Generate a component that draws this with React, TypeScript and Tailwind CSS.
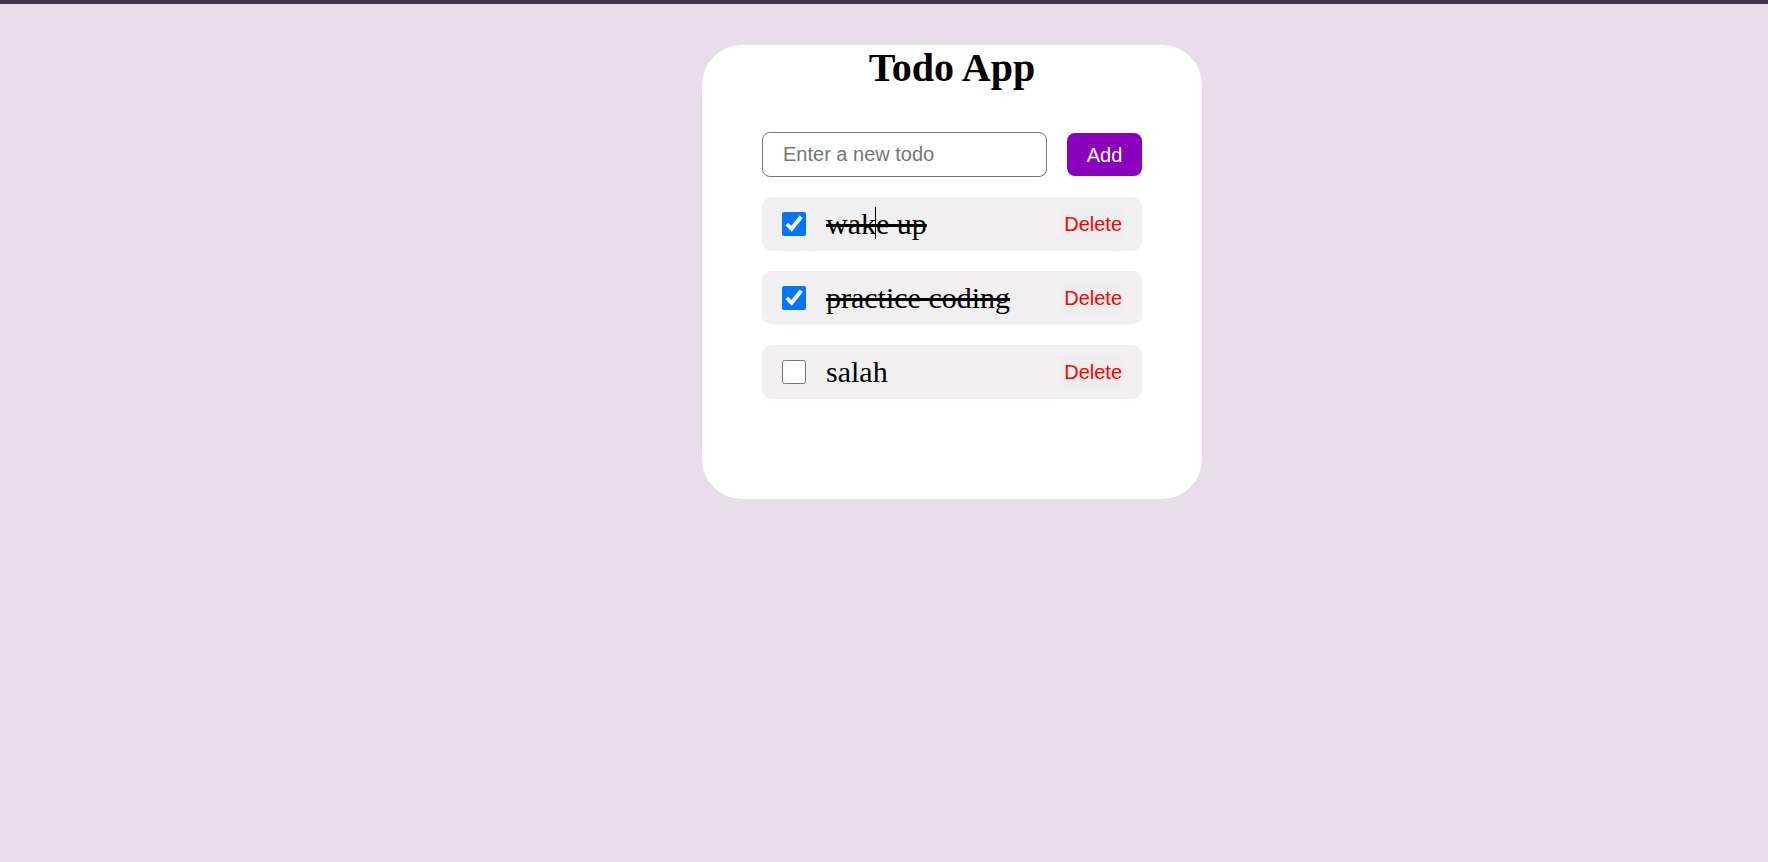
import React, { useState } from "react";

type Todo = { id: number; text: string; done: boolean };

export default function App() {
  const [todos, setTodos] = useState<Todo[]>([
    { id: 1, text: "wake up", done: true },
    { id: 2, text: "practice coding", done: true },
    { id: 3, text: "salah", done: false },
  ]);
  const [value, setValue] = useState("");

  const toggle = (id: number) =>
    setTodos((t) => t.map((x) => (x.id === id ? { ...x, done: !x.done } : x)));
  const remove = (id: number) => setTodos((t) => t.filter((x) => x.id !== id));
  const add = () => {
    if (!value.trim()) return;
    setTodos((t) => [...t, { id: Date.now(), text: value.trim(), done: false }]);
    setValue("");
  };

  return (
    <div className="min-h-screen h-[862px] bg-[#e8deea] flex flex-col">
      <div className="h-[4px] w-full bg-[#3e3747]" />
      <div className="flex justify-center pl-[136px] pt-[41px]">
        <div className="w-[500px] h-[454px] bg-white rounded-[40px] px-[60px] pt-[1px] flex flex-col">
          <h1 className="text-center font-bold text-[40px] leading-[44px] text-black [font-family:'Liberation_Serif',serif]">
            Todo App
          </h1>
          <div className="mt-[42px] flex items-center gap-[20px] h-[45px]">
            <input
              value={value}
              onChange={(e) => setValue(e.target.value)}
              placeholder="Enter a new todo"
              className="w-[285px] h-[45px] border border-[#767676] rounded-[8px] pl-[20px] pr-2 text-[20px] text-black placeholder:text-[#757575] outline-none [font-family:'Liberation_Sans',Arial,sans-serif]"
            />
            <button
              onClick={add}
              className="w-[75px] h-[43px] rounded-[8px] bg-[#8a00bf] text-white text-[20px] [font-family:'Liberation_Sans',Arial,sans-serif]"
            >
              Add
            </button>
          </div>
          <ul className="mt-[20px] flex flex-col gap-[20px]">
            {todos.map((t, i) => (
              <li
                key={t.id}
                className="relative h-[54px] rounded-[10px] bg-[#f1eff0] flex items-center px-[20px]"
              >
                <input
                  type="checkbox"
                  checked={t.done}
                  onChange={() => toggle(t.id)}
                  className="m-0 w-[24px] h-[24px] shrink-0 accent-[#0075ff]"
                />
                <span
                  className={
                    "ml-[20px] -mt-[2px] text-[30px] text-black [font-family:'Liberation_Serif',serif] " +
                    (t.done ? "line-through" : "")
                  }
                >
                  {t.text}
                </span>
                <button
                  onClick={() => remove(t.id)}
                  className="ml-auto h-[32px] pl-[2px] pr-0 bg-[#efeeef] text-[#ff0000] text-[20px] [font-family:'Liberation_Sans',Arial,sans-serif]"
                >
                  Delete
                </button>
                {i === 0 && (
                  <span className="absolute left-[113px] top-[10px] w-px h-[32px] bg-black" />
                )}
              </li>
            ))}
          </ul>
        </div>
      </div>
    </div>
  );
}
